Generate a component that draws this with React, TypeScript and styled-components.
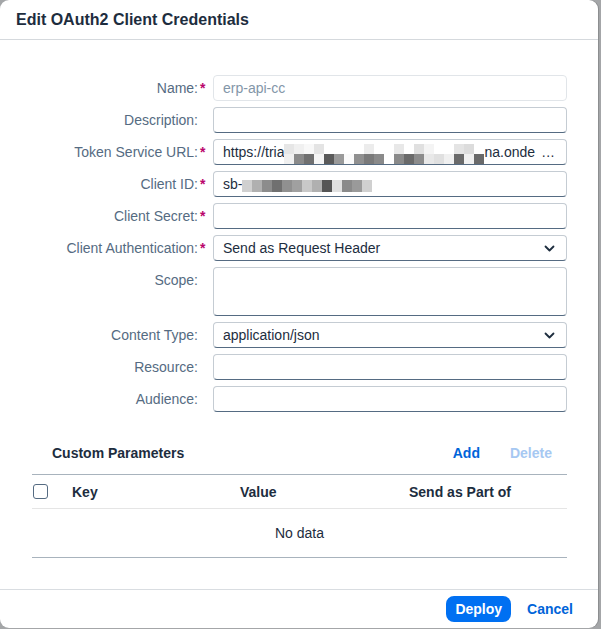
import styled, { createGlobalStyle } from 'styled-components';

const GlobalStyle = createGlobalStyle`
    html, body {
        margin: 0;
        padding: 0;
        background: #a4a6a8;
    }

    body {
        font-family: 'Liberation Sans', Arial, sans-serif;
        color: #1d2d3e;
    }
`;

const Dialog = styled.div`
    width: 598px;
    height: 628px;
    background: #ffffff;
    border-radius: 9px;
    box-shadow: 1px 0 0 #8c8e90;
    display: flex;
    flex-direction: column;
    overflow: hidden;
`;

const Header = styled.header`
    height: 39px;
    border-bottom: 1px solid #d5d9dd;
    display: flex;
    align-items: center;
    padding: 0 16px;
    font-size: 16px;
    font-weight: 700;
    color: #1d2d3e;
`;

const Content = styled.div`
    flex: 1;
    padding: 35px 31px 0 32px;
`;

const FormGrid = styled.div`
    display: grid;
    grid-template-columns: 166px 15px 1fr;
    row-gap: 6px;
`;

const Label = styled.label`
    font-size: 14px;
    line-height: 26px;
    color: #556b82;
    text-align: right;
    white-space: nowrap;
`;

const Required = styled.span<{ $show: boolean }>`
    font-size: 14px;
    line-height: 26px;
    color: #ba066c;
    font-weight: 700;
    padding-left: 2px;
    visibility: ${(p) => (p.$show ? 'visible' : 'hidden')};
`;

const Field = styled.div<{ $tall?: boolean; $readonly?: boolean }>`
    height: ${(p) => (p.$tall ? '49px' : '26px')};
    box-sizing: border-box;
    border: 1px solid ${(p) => (p.$readonly ? '#e1e5e9' : '#c5ccd3')};
    border-bottom-color: ${(p) => (p.$readonly ? '#e1e5e9' : '#556b82')};
    border-radius: 4px;
    background: #ffffff;
    display: flex;
    align-items: center;
    padding: 0 11px 0 9px;
    font-size: 14px;
    color: ${(p) => (p.$readonly ? '#8396a8' : '#1d2d3e')};
    white-space: nowrap;
    overflow: hidden;
`;

const Ellipsis = styled.span`
    flex: none;
    margin-left: auto;
    letter-spacing: 0.5px;
`;

const Chevron = styled.svg`
    margin-left: auto;
    flex: none;
`;

const Mosaic = styled.span<{ $cols: number; $rows: number }>`
    flex: none;
    display: inline-grid;
    grid-template-columns: repeat(${(p) => p.$cols}, 10px);
    grid-auto-rows: ${(p) => (p.$rows > 1 ? '10px' : '12px')};
    margin-top: ${(p) => (p.$rows > 1 ? '3px' : '4px')};
`;

const Cell = styled.span<{ $c: string }>`
    background: ${(p) => p.$c};
`;

const Toolbar = styled.div`
    margin-top: 20px;
    height: 42px;
    display: flex;
    align-items: center;
    padding: 0 15px 0 20px;
    gap: 30px;
`;

const ToolbarTitle = styled.div`
    font-size: 14px;
    font-weight: 700;
    color: #1d2d3e;
    margin-right: auto;
`;

const TextButton = styled.span<{ $disabled?: boolean }>`
    font-size: 14px;
    font-weight: 700;
    color: ${(p) => (p.$disabled ? '#a6c8f2' : '#0064d9')};
`;

const Table = styled.div`
    border-top: 1px solid #a8b3bd;
    border-bottom: 1px solid #a8b3bd;
`;

const HeadRow = styled.div`
    height: 33px;
    display: grid;
    grid-template-columns: 40px 168px 169px 1fr;
    align-items: center;
    border-bottom: 1px solid #e5e5e5;
    font-size: 14px;
    font-weight: 700;
    color: #1d2d3e;
`;

const Checkbox = styled.span`
    width: 15px;
    height: 15px;
    box-sizing: border-box;
    border: 1px solid #556b82;
    border-radius: 3px;
    margin-left: 1px;
`;

const Empty = styled.div`
    height: 48px;
    display: flex;
    align-items: center;
    justify-content: center;
    font-size: 14px;
    color: #1d2d3e;
`;

const Footer = styled.footer`
    height: 38px;
    border-top: 1px solid #d9dde1;
    display: flex;
    align-items: center;
    justify-content: flex-end;
    gap: 16px;
    padding: 0 25px 0 0;
`;

const PrimaryButton = styled.button`
    height: 26px;
    padding: 0 9px;
    border: none;
    border-radius: 8px;
    background: #0070f2;
    color: #ffffff;
    font-family: inherit;
    font-size: 14px;
    font-weight: 700;
    margin-top: -1px;
`;

const urlTop = [
    '#e6e6e6', '#f0f0f0', '#f8f8f8', '#e4e4e4', '#fff', '#fff', '#fff',
    '#fff', '#ececec', '#fff', '#fff', '#e8e8e8', '#fff', '#e0e0e0',
    '#f4f4f4', '#fff', '#fff', '#e4e4e4', '#dcdcdc', '#fff',
];
const urlBottom = [
    '#f0f0f0', '#8a8a8a', '#707070', '#f5f5f5', '#5a5a5a', '#9a9a9a', '#fafafa',
    '#909090', '#7a7a7a', '#8a8a8a', '#fff', '#8a8a8a', '#6a6a6a', '#8c8c8c',
    '#e8e8e8', '#e0e0e0', '#f0f0f0', '#6a6a6a', '#f0f0f0', '#6a6a6a',
];
const idCells = [
    '#d0d0d0', '#b0b0b0', '#8c8c8c', '#707070', '#909090', '#a0a0a0', '#c8c8c8',
    '#b0b0b0', '#555555', '#e0e0e0', '#8a8a8a', '#9a9a9a', '#d0d0d0',
];

const ChevronIcon = () => (
    <Chevron width="11" height="7" viewBox="0 0 11 7">
        <path d="M1.5 1.5 L5.5 5.5 L9.5 1.5" fill="none" stroke="#1d2d3e" strokeWidth="1.8" strokeLinecap="round" strokeLinejoin="round" />
    </Chevron>
);

type Row = {
    label: string;
    required?: boolean;
    content?: React.ReactNode;
    tall?: boolean;
    readonly?: boolean;
};

const rows: Row[] = [
    { label: 'Name:', required: true, content: 'erp-api-cc', readonly: true },
    { label: 'Description:' },
    {
        label: 'Token Service URL:',
        required: true,
        content: (
            <>
                https://tria
                <Mosaic $cols={20} $rows={2}>
                    {[...urlTop, ...urlBottom].map((c, i) => (
                        <Cell key={i} $c={c} />
                    ))}
                </Mosaic>
                na.onde
                <Ellipsis>...</Ellipsis>
            </>
        ),
    },
    {
        label: 'Client ID:',
        required: true,
        content: (
            <>
                sb-
                <Mosaic $cols={13} $rows={1}>
                    {idCells.map((c, i) => (
                        <Cell key={i} $c={c} />
                    ))}
                </Mosaic>
            </>
        ),
    },
    { label: 'Client Secret:', required: true },
    {
        label: 'Client Authentication:',
        required: true,
        content: (
            <>
                Send as Request Header
                <ChevronIcon />
            </>
        ),
    },
    { label: 'Scope:', tall: true },
    {
        label: 'Content Type:',
        content: (
            <>
                application/json
                <ChevronIcon />
            </>
        ),
    },
    { label: 'Resource:' },
    { label: 'Audience:' },
];

export default function App() {
    return (
        <>
            <GlobalStyle />
            <Dialog>
                <Header>Edit OAuth2 Client Credentials</Header>
                <Content>
                    <FormGrid>
                        {rows.map((r) => [
                            <Label key={r.label + 'l'}>{r.label}</Label>,
                            <Required key={r.label + 'r'} $show={!!r.required}>*</Required>,
                            <Field key={r.label + 'f'} $tall={r.tall} $readonly={r.readonly}>
                                {r.content}
                            </Field>,
                        ])}
                    </FormGrid>
                    <Toolbar>
                        <ToolbarTitle>Custom Parameters</ToolbarTitle>
                        <TextButton>Add</TextButton>
                        <TextButton $disabled>Delete</TextButton>
                    </Toolbar>
                    <Table>
                        <HeadRow>
                            <Checkbox />
                            <span>Key</span>
                            <span>Value</span>
                            <span>Send as Part of</span>
                        </HeadRow>
                        <Empty>No data</Empty>
                    </Table>
                </Content>
                <Footer>
                    <PrimaryButton>Deploy</PrimaryButton>
                    <TextButton>Cancel</TextButton>
                </Footer>
            </Dialog>
        </>
    );
}
